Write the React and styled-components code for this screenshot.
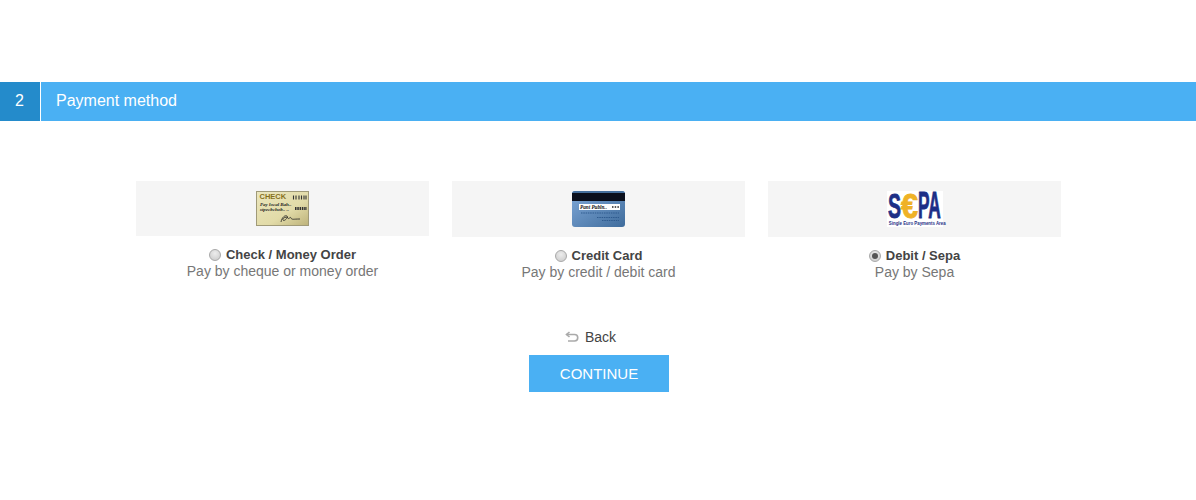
import React from "react";
import styled, { createGlobalStyle } from "styled-components";

const Global = createGlobalStyle`
  html, body { margin: 0; padding: 0; background: #fff; }
  body { font-family: "Liberation Sans", Arial, sans-serif; font-size: 14px; color: #777; }
`;
const Page = styled.div`
  width: 1196px;
  height: 500px;
  padding-top: 82px;
  box-sizing: border-box;
  overflow: hidden;
`;
const StepBar = styled.div`
  display: flex;
  height: 39px;
  background: #4ab0f3;
  color: #fff;
  font-size: 16px;
  line-height: 37px;
`;
const StepNumber = styled.div`
  width: 40px;
  padding-right: 1px;
  box-sizing: border-box;
  text-align: center;
  background: #248bcb;
  border-right: 0;
  box-shadow: 1px 0 0 #fff;
`;
const StepTitle = styled.div`
  padding-left: 16px;
`;
const Options = styled.div`
  display: grid;
  grid-template-columns: repeat(3, 293px);
  column-gap: 23px;
  padding: 60px 0 0 136px;
`;
const Option = styled.div`
  display: flex;
  flex-direction: column;
  align-items: center;
`;
const Tile = styled.div`
  align-self: stretch;
  height: ${(p) => p.$height}px;
  background: #f5f5f5;
  display: flex;
  align-items: center;
  justify-content: center;
`;
const Label = styled.label`
  display: flex;
  align-items: center;
  height: 16px;
  margin-top: 11px;
  font-size: 13px;
  font-weight: 700;
  color: #444;
  line-height: 16px;
`;
const Radio = styled.span`
  box-sizing: border-box;
  width: 12px;
  height: 12px;
  margin-right: 5px;
  border-radius: 50%;
  border: 1px solid #a8a8a8;
  background: radial-gradient(circle at 50% 35%, #ededed 0%, #d0d0d0 80%);
  display: flex;
  align-items: center;
  justify-content: center;
  &::after {
    content: "";
    display: ${(p) => (p.$checked ? "block" : "none")};
    width: 6px;
    height: 6px;
    border-radius: 50%;
    background: #555;
  }
`;
const Description = styled.div`
  line-height: 16px;
  color: #777;
`;
const Actions = styled.div`
  display: flex;
  flex-direction: column;
  align-items: center;
  padding: 49px 0 0 2px;
`;
const BackLink = styled.a`
  display: flex;
  align-items: center;
  height: 16px;
  margin-right: 17px;
  color: #444;
  gap: 6px;
`;
const Continue = styled.button`
  width: 140px;
  height: 37px;
  margin-top: 10px;
  border: 0;
  padding: 0;
  background: #4ab0f3;
  color: #fff;
  font: 400 15px "Liberation Sans", Arial, sans-serif;
`;

const CheckLogo = () => (
  <svg width="53" height="35" viewBox="0 0 53 35">
    <defs>
      <linearGradient id="chk" x1="0" y1="0" x2="1" y2="1">
        <stop offset="0" stopColor="#ebe6bd" />
        <stop offset="0.6" stopColor="#e2dba8" />
        <stop offset="1" stopColor="#bdb27a" />
      </linearGradient>
    </defs>
    <rect x="0.5" y="0.5" width="52" height="34" fill="url(#chk)" stroke="#a09a78" />
    <text x="3.5" y="8" fontFamily="Liberation Sans" fontWeight="700" fontSize="7.5" fill="#86701c">CHECK</text>
    <path d="M37.5 4.5v4M40 4.5v4M43 4.5v4M45.5 4.5v4M48 4.5v4M50 4.5v4" stroke="#333" strokeWidth="1.1" />
    <text x="4" y="15" fontFamily="Liberation Serif" fontStyle="italic" fontWeight="700" fontSize="5" fill="#222">Pay local Bah..</text>
    <text x="4" y="19.5" fontFamily="Liberation Serif" fontStyle="italic" fontWeight="700" fontSize="5" fill="#222">stpecbchob.. ..</text>
    <path d="M39 17.5h12" stroke="#333" strokeWidth="3" strokeDasharray="1.5 0.8" />
    <path d="M25 31c1-5 4-7 6-6s-3 6-4 4 4-4 5-2 2-2 3 0 2 1 9 1" fill="none" stroke="#222" strokeWidth="0.8" />
  </svg>
);
const CardLogo = () => (
  <svg width="53" height="36" viewBox="0 0 53 36">
    <defs>
      <linearGradient id="crd" x1="0" y1="0" x2="1" y2="1">
        <stop offset="0" stopColor="#7fa8d8" />
        <stop offset="1" stopColor="#3f6c9c" />
      </linearGradient>
    </defs>
    <rect x="0" y="0" width="53" height="36" rx="3" fill="url(#crd)" />
    <path d="M0 3a3 3 0 0 1 3-3h47a3 3 0 0 1 3 3v1H0z" fill="#456f9c" />
    <rect x="0" y="2" width="53" height="8" fill="#0a0f1c" />
    <rect x="7" y="13" width="41" height="6" fill="#fff" />
    <text x="8" y="18" fontFamily="Liberation Serif" fontStyle="italic" fontWeight="700" fontSize="5.2" fill="#111">Pant Publn..</text>
    <path d="M40 16h7" stroke="#222" strokeWidth="1.6" strokeDasharray="1.5 1.2" />
    <path d="M9 22h38M25 26.5h22M30 29.5h17" stroke="#2e5a8e" strokeWidth="1" strokeDasharray="1.5 0.8" />
  </svg>
);
const SepaLogo = () => (
  <svg width="56" height="36" viewBox="0 0 56 36" overflow="visible">
    <rect width="56" height="36" fill="#fff" />
    <g fontFamily="Liberation Sans" fontWeight="700" fontSize="36" stroke="#1d2f86" strokeWidth="0.9">
      <text transform="translate(1 27) scale(0.54 1)" fill="#1d2f86">S</text>
      <text transform="translate(14 27) scale(0.85 1)" fill="#efb226" stroke="#efb226">€</text>
      <text transform="translate(31 27) scale(0.48 1)" fill="#1d2f86">PA</text>
    </g>
    <text x="1" y="34.5" fontFamily="Liberation Sans" fontWeight="700" fontSize="5.2" fill="#1d2f86" transform="translate(1 0) scale(0.84 1)">Single Euro Payments Area</text>
  </svg>
);

const options = [
  { name: "Check / Money Order", text: "Pay by cheque or money order", Logo: CheckLogo, height: 55 },
  { name: "Credit Card", text: "Pay by credit / debit card", Logo: CardLogo, height: 56 },
  { name: "Debit / Sepa", text: "Pay by Sepa", Logo: SepaLogo, height: 56, checked: true },
];

export default function App() {
  return (
    <Page>
      <Global />
      <StepBar>
        <StepNumber>2</StepNumber>
        <StepTitle>Payment method</StepTitle>
      </StepBar>
      <Options>
        {options.map(({ name, text, Logo, height, checked }) => (
          <Option key={name}>
            <Tile $height={height}><Logo /></Tile>
            <Label>
              <Radio $checked={checked} />
              {name}
            </Label>
            <Description>{text}</Description>
          </Option>
        ))}
      </Options>
      <Actions>
        <BackLink>
          <svg width="14" height="12" viewBox="0 0 14 12" fill="none" stroke="#aaa" strokeWidth="1.6">
            <path d="M1.5 3.5h8a3 3 0 0 1 0 6.5H3" />
            <path d="M4.5 1L1.5 3.5 4.5 6" />
          </svg>
          Back
        </BackLink>
        <Continue>CONTINUE</Continue>
      </Actions>
    </Page>
  );
}
